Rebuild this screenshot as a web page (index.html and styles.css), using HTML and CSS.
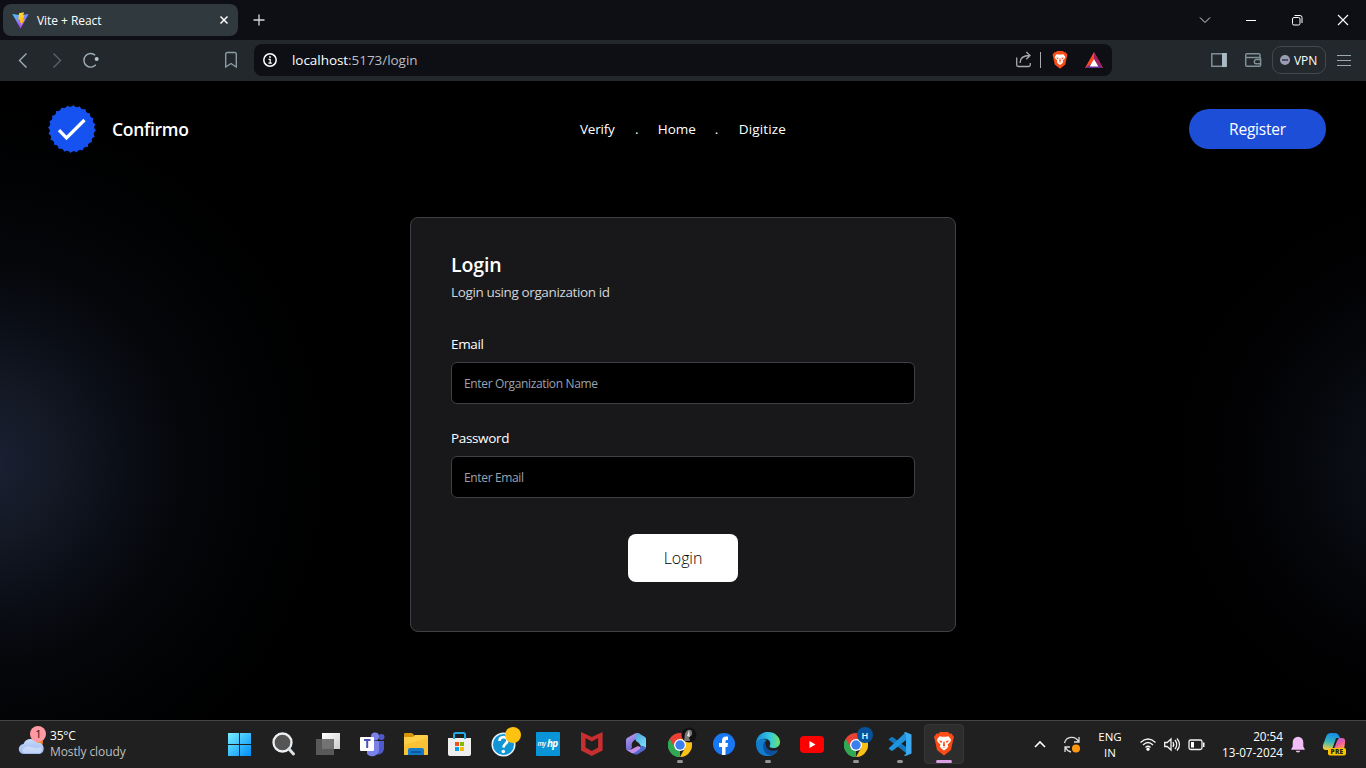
FILE: index.html
```html
<!DOCTYPE html>
<html lang="en">
<head>
<meta charset="utf-8">
<title>Vite + React</title>
<link rel="stylesheet" href="styles.css">
</head>
<body>
<div class="screen">
  <div class="tabs">
    <div class="tab">
      <svg class="tab-icon" width="17" height="17" viewBox="0 0 17 17"><defs><linearGradient id="vite" x1="0" y1="0" x2=".6" y2="1"><stop offset="0" stop-color="#41d1ff"/><stop offset="1" stop-color="#bd34fe"/></linearGradient><linearGradient id="bolt" x1="0" y1="0" x2="0" y2="1"><stop offset="0" stop-color="#ffdd35"/><stop offset="1" stop-color="#ffa800"/></linearGradient></defs><path fill="url(#vite)" d="M.3 2 8.5 3.3 16.7 2 8.5 16.5z"/><path fill="url(#bolt)" d="M12 .3 7 1.3 6.3 8l2-.5-.6 3.5 1.6-.5-.8 4L13 7l-2 .4L12.500 3.400l-1.300.2z"/></svg>
      <span class="tab-title">Vite + React</span>
      <svg class="tab-close" width="10" height="10" viewBox="0 0 10 10"><path d="M1.500 1.500 8.500 8.500M8.500 1.500 1.500 8.500" stroke="#fff" stroke-width="1.500"/></svg>
    </div>
    <svg class="tab-new" width="12" height="12" viewBox="0 0 12 12"><path d="M6 .5v11M.5 6h11" stroke="#d5d7dc" stroke-width="1.300"/></svg>
    <div class="window-buttons">
      <svg width="46" height="40" viewBox="0 0 46 40"><path d="m18 17.500 5 5 5-5" stroke="#ddd" fill="none"/></svg>
      <svg width="46" height="40" viewBox="0 0 46 40"><path d="M18 20.500h10" stroke="#fff"/></svg>
      <svg width="46" height="40" viewBox="0 0 46 40"><g stroke="#fff" fill="none"><rect x="18.500" y="17.500" width="7.500" height="7.500" rx="1.500"/><path d="M20.500 15.500h5.500a2 2 0 0 1 2 2V23"/></g></svg>
      <svg width="46" height="40" viewBox="0 0 46 40"><path d="m18 15 10 10M28 15 18 25" stroke="#fff" stroke-width="1.100"/></svg>
    </div>
  </div>

  <div class="toolbar">
    <svg class="nav-buttons" width="110" height="41" viewBox="0 0 110 41"><g fill="none" stroke-width="1.400"><path d="m26.500 13.500-7 7 7 7" stroke="#9eafb8"/><path d="m53.500 13.500 7 7-7 7" stroke="#58646a"/><path d="M95.800 24.800A6.800 6.800 0 1 1 95.200 15.200" stroke="#9eafb8"/></g><circle cx="96.700" cy="19" r="2" fill="#b5c6ce"/></svg>
    <svg class="bookmark" width="14" height="18" viewBox="0 0 14 18"><path d="M1.700 3a1.500 1.500 0 0 1 1.500-1.500h7.600A1.500 1.500 0 0 1 12.300 3v13L7 12.500 1.700 16z" fill="none" stroke="#8b9ba4" stroke-width="1.400"/></svg>
    <div class="address">
      <svg class="info" width="14" height="14" viewBox="0 0 14 14"><circle cx="7" cy="7" r="6.200" fill="none" stroke="#fff" stroke-width="1.500"/><path d="M5.500 6.300H7.200V10M5.400 10.200h3.400" fill="none" stroke="#fff" stroke-width="1.200"/><circle cx="7" cy="4" r=".9" fill="#fff"/></svg>
      <span class="url"><b>localhost</b>:5173/login</span>
      <svg class="address-icons" width="96" height="32" viewBox="0 0 96 32"><g fill="none" stroke="#a9aaad" stroke-width="1.300"><path d="M4.700 13.500v7.300c0 1 .7 1.700 1.700 1.700h10.200c1 0 1.700-.7 1.700-1.700V19"/><path d="M8 19c0-4.500 3.500-7.500 9.800-7.500M14.300 8l3.700 3.500-3.700 3.700"/></g><path d="M28.500 8v16" stroke="#a9aaad"/><use href="#brave" x="40" y="7" width="16" height="18"/><path d="M82 8 73 24h18z" fill="#ff4724"/><path d="m82 8 9 16-9-5.500z" fill="#9e1f63"/><path d="m73 24 9-6 9 6z" fill="#662d91"/><path d="m82 15-4.300 7.500h8.600z" fill="#fff"/></svg>
    </div>
    <svg class="panel-icons" width="56" height="20" viewBox="0 0 56 20"><g fill="none" stroke="#7f9099" stroke-width="1.500"><rect x="1.800" y="3.800" width="14.200" height="12.500"/><path d="M50 7.500V5a1.300 1.300 0 0 0-1.300-1.300H37A1.300 1.300 0 0 0 35.700 5v10A1.300 1.300 0 0 0 37 16.300h12.300a1.300 1.300 0 0 0 1.300-1.300V9a1.500 1.500 0 0 0-1.500-1.500H36M51 9.500h-5a2.200 2.200 0 0 0 0 4.300h5"/></g><path d="M12 3h4.800v14H12z" fill="#a9bbc4"/></svg>
    <div class="vpn"><svg width="10" height="10" viewBox="0 0 10 10"><circle cx="5" cy="5" r="5" fill="#9b9bb4"/><path d="M2 5h6" stroke="#353746" stroke-width="1.500"/></svg><span>VPN</span></div>
    <svg class="menu" width="14" height="12" viewBox="0 0 14 12"><path d="M0 1.500h14M0 6.500h14M0 11.500h14" stroke="#98a9b1" stroke-width="1"/></svg>
  </div>

  <main class="page">
    <header class="site-header">
      <div class="brand">
        <svg width="50" height="50" viewBox="-25 -25 50 50"><g fill="#1552f0"><circle r="22.400"/><path id="seal" d="M-17-17H17V17H-17z" transform="rotate(3.750)"/><use href="#seal" transform="rotate(15)"/><use href="#seal" transform="rotate(30)"/><use href="#seal" transform="rotate(45)"/><use href="#seal" transform="rotate(60)"/><use href="#seal" transform="rotate(75)"/></g><path d="m-13 1.200 7.500 7.600L12.500-9" fill="none" stroke="#fff" stroke-width="3.300"/></svg>
        <span class="brand-name">Confirmo</span>
      </div>
      <nav class="site-nav"><a class="verify">Verify</a><i>.</i><a class="home">Home</a><i>.</i><a class="digitize">Digitize</a></nav>
      <button class="register">Register</button>
    </header>
    <form class="card">
      <h1>Login</h1>
      <p class="subtitle">Login using organization id</p>
      <label class="email-label">Email</label>
      <div class="field field-org">Enter Organization Name</div>
      <label class="password-label">Password</label>
      <div class="field field-email">Enter Email</div>
      <button class="submit" type="button">Login</button>
    </form>
  </main>

  <footer class="taskbar">
    <div class="weather">
      <svg width="32" height="32" viewBox="0 0 32 32"><defs><linearGradient id="cloud" x1="0" y1="0" x2="0" y2="1"><stop stop-color="#c7dcff"/><stop offset="1" stop-color="#9bb6e9"/></linearGradient></defs><circle cx="20" cy="14" r="6" fill="#f47c13"/><path d="M7 26a5 5 0 0 1-.5-10 7.500 7.500 0 0 1 13.500-1.500 6 6 0 0 1 3 11.500z" fill="url(#cloud)"/><path d="M7 20c6-4 9 2 17-1 2 4 0 6-3 6H8c-3 0-4-3-1-5z" fill="#e0ebff" opacity=".55"/><circle cx="21" cy="6" r="8" fill="#ff99a4"/><text class="badge-number" x="21.500" y="10" text-anchor="middle">1</text></svg>
      <div class="weather-text"><span class="temp">35°C</span><span class="sky">Mostly cloudy</span></div>
    </div>
    <div class="apps">
      <div class="app"><svg viewBox="0 0 32 32"><defs><linearGradient id="win" x1="0" y1="0" x2="1" y2="1"><stop stop-color="#78efff"/><stop offset="1" stop-color="#008df8"/></linearGradient></defs><path fill="url(#win)" d="M4 4h11v11H4zM16 4h11v11H16zM4 16h11v11H4zM16 16h11v11H16z"/></svg></div>
      <div class="app"><svg viewBox="0 0 32 32"><circle cx="14.500" cy="13.500" r="9" fill="#555" stroke="#edf0f3" stroke-width="2.300"/><path d="m21 20 4.500 5" stroke="#dce1e6" stroke-width="3" stroke-linecap="round"/></svg></div>
      <div class="app"><svg viewBox="0 0 32 32"><defs><linearGradient id="task" x2="1" y2="1"><stop stop-color="#fff"/><stop offset="1" stop-color="#ccc"/></linearGradient></defs><path d="M10 4h18v16H10z" fill="url(#task)"/><path d="M4 10h18v16H4z" fill="#626262" opacity=".87"/></svg></div>
      <div class="app"><svg viewBox="0 0 32 32"><circle cx="25.500" cy="8" r="3" fill="#5059c9"/><path d="M18 12h10v8a6 6 0 0 1-8 5z" fill="#5059c9"/><circle cx="19" cy="7.500" r="4" fill="#7b83eb"/><path d="M11 12h12v7a7 7 0 0 1-12 6z" fill="#7b83eb"/><rect x="4" y="8" width="14" height="14" rx="1" fill="#fff"/><path d="M8 11h6.500M11.200 11v8" stroke="#4b53bc" stroke-width="2"/></svg></div>
      <div class="app"><svg viewBox="0 0 32 32"><path d="M4 5q0-1 1-1h7l3 3-3 4H4z" fill="#d89309"/><path d="M4 8h9l2-2h12q1 0 1 1v18q0 1-1 1H4z" fill="#ffcf48"/><path d="M4 16 28 9v16q0 1-1 1H4z" fill="#f8bd2f" opacity=".7"/><path d="M8 26v-5q0-2 2-2h12q2 0 2 2v5z" fill="#1479c9"/><path d="M11 23h10" stroke="#0a5294" stroke-width="1.500"/></svg></div>
      <div class="app"><svg viewBox="0 0 32 32"><path d="M4 9h23v16q0 2-2 2H6q-2 0-2-2z" fill="#efefef"/><path d="M10 10V5.500Q10 4 11.500 4h8Q21 4 21 5.500V10" fill="none" stroke="#22a9e8" stroke-width="2"/><path fill="#f25022" d="M11 13h4v4h-4z"/><path fill="#7fba00" d="M16 13h4v4h-4z"/><path fill="#00a4ef" d="M11 18h4v4h-4z"/><path fill="#ffb900" d="M16 18h4v4h-4z"/></svg></div>
      <div class="app"><svg viewBox="0 0 32 32"><circle cx="15.500" cy="15.500" r="11.300" fill="#1095d5" stroke="#e7f3fa" stroke-width="1.500"/><path d="M11.500 12c0-5 8-5 8-.5 0 3.500-4 3-4 7" fill="none" stroke="#fff" stroke-width="2.700"/><circle cx="15.300" cy="22.500" r="1.800" fill="#fff"/><circle cx="25" cy="6" r="8" fill="#ffc20e"/></svg></div>
      <div class="app"><svg viewBox="0 0 32 32"><rect x="4" y="3" width="24" height="24" rx="1" fill="#0894d6"/><text class="hp-my" x="5.500" y="17">my</text><text class="hp-name" x="15" y="18">hp</text></svg></div>
      <div class="app"><svg viewBox="0 0 32 32"><path d="m5 3 10.800 5L26.600 3v18.500L15.800 27 5 21.500zm4.500 6v9.500l6.300 3.500 6.300-3.500V9l-6.300 3.500z" fill="#c62e2f" fill-rule="evenodd"/></svg></div>
      <div class="app"><svg viewBox="0 0 32 32"><defs><linearGradient id="m1" y2="1" x2=".3"><stop stop-color="#bfa0f5"/><stop offset="1" stop-color="#6a65ce"/></linearGradient><linearGradient id="m2" x2=".5" y2="1"><stop stop-color="#4e9fd9"/><stop offset="1" stop-color="#75dcfa"/></linearGradient></defs><path d="M6 11q0-1 1-2l8-4.500q2-1 4 0-3 2-3 5l-3 3q-2 2-1 6l-3 4q-3-1-3-4z" fill="url(#m1)"/><path d="M18 4q1 0 2 1l5 3q1 1 1 2v9q-2-2-5-2-1-3-5-5l-1-3q0-3 3-5z" fill="url(#m2)"/><path d="M7 21h6l4-2 4-2q4 0 5 2-1 2-3 3l-5 3q-2 1-4 0z" fill="#5268cc"/><path d="M6 20q3 2 6 0l6-3 2 1v2l-6 4q-2 1-4-1z" fill="#c48ee9"/></svg></div>
      <div class="app running"><svg viewBox="0 0 32 32"><use href="#chrome" x="4" y="4" width="24" height="24"/><circle cx="25" cy="6" r="7.500" fill="#111"/><path d="M20 12c1-4 0-9 4-11q5-1 4 5l-3 2 1 4z" fill="#777"/><path d="m25 1-2 6 3 1z" fill="#ddd"/></svg></div>
      <div class="app"><svg viewBox="0 0 32 32"><circle cx="16" cy="15" r="11" fill="#1877f2"/><path d="M14 26v-8h-3v-4h3v-2c0-4 2-5 6-4.500V11c-2-.2-2.500.3-2.500 1.500V14H20l-.5 4h-2v8z" fill="#fff"/></svg></div>
      <div class="app running"><svg viewBox="0 0 32 32"><defs><linearGradient id="edge" x2="1" y2="0"><stop stop-color="#168bdc"/><stop offset=".6" stop-color="#38c9dd"/><stop offset="1" stop-color="#6be363"/></linearGradient></defs><path d="M4 15C4 8 9 3 16 3s12 5 12 10c0 4-3 6-7 6-3 0-4-1-3-3 2-6-8-10-14-1z" fill="url(#edge)"/><path d="M4 15c2-5 7-6 11-4-4 2-5 8 0 11 4 3 8 1 11-1-2 4-6 6-11 6C8 27 4 21 4 15z" fill="#117dcc"/><path d="M14 12c-5 4-3 12 3 14 3 1 7-2 9-5-9 3-14-3-12-9z" fill="#0b519e"/></svg></div>
      <div class="app"><svg viewBox="0 0 32 32"><rect x="4" y="7" width="24" height="17" rx="4" fill="#f00"/><path d="m13.500 12 6 3.500-6 3.500z" fill="#fff"/></svg></div>
      <div class="app running"><svg viewBox="0 0 32 32"><use href="#chrome" x="4" y="4" width="24" height="24"/><circle cx="25" cy="6" r="8" fill="#06529b"/><text class="profile" x="25" y="9.500" text-anchor="middle">H</text></svg></div>
      <div class="app running"><svg viewBox="0 0 32 32"><path d="M4.500 10.500 7 8.300q1-.6 2 0L22 18v6z" fill="#1279c1"/><path d="M4.500 19.500 22 3v8L9 21.500q-1 .6-2 0z" fill="#1f93dc"/><path d="m21.500 3 6 2.500V24.500l-6 2.500q-1 0-1.500-1l2-1V5.500l-2-1.500q.5-1 1.500-1z" fill="#3baaf0"/></svg></div>
      <div class="app running active"><svg viewBox="0 0 32 32"><use href="#brave" x="6" y="4" width="20" height="24"/></svg></div>
    </div>
    <div class="tray">
      <svg class="tray-left" width="54" height="30" viewBox="0 0 54 30"><path d="m5 17 5-5 5 5" fill="none" stroke="#fff" stroke-width="1.600"/><g fill="none" stroke="#ddd" stroke-width="1.300"><path d="M34.500 13a7.500 7.500 0 0 1 14-1.500M49 7v5h-5M35 22v-5h5M35.500 17.500A8 8 0 0 0 41 22"/></g><circle cx="46" cy="18.500" r="4" fill="#ff9810"/></svg>
      <div class="language"><span class="eng">ENG</span><span class="in">IN</span></div>
      <svg class="status" width="66" height="24" viewBox="0 0 66 24"><g fill="none" stroke="#f2f2f2" stroke-width="1.300"><path d="M.5 9.500q7.500-7 15 0M3 12q5-5 10 0M5.500 14.500q2.500-2.500 5 0"/><path d="M24.700 9.500h2.500L31 6v11l-3.800-3.500h-2.500zM33 9q1.500 2.500 0 5M35 7q3.500 4.500 0 9M37 5.500q5 6 0 12"/><rect x="49" y="7" width="13" height="9.500" rx="1.800"/></g><circle cx="8" cy="16.200" r="1.600" fill="#fff"/><path d="M51 9h3v5.500h-3zM63 9.500h1.500v4.500H63z" fill="#fff"/></svg>
      <div class="clock"><span class="time">20:54</span><span class="date">13-07-2024</span></div>
      <svg class="bell" width="14" height="17" viewBox="0 0 14 17"><path d="M7 .8A5.300 5.300 0 0 0 1.700 6v4.500L.3 13v.7h13.400V13l-1.400-2.500V6A5.300 5.300 0 0 0 7 .8zM4.800 14.700h4.400a2.200 1.700 0 0 1-4.400 0z" fill="#f1bef5"/></svg>
      <svg class="copilot" width="28" height="28" viewBox="0 0 28 28"><defs><linearGradient id="co1" x1=".4" x2=".2" y2="1"><stop stop-color="#168be6"/><stop offset=".5" stop-color="#35b7bd"/><stop offset="1" stop-color="#ffd036"/></linearGradient><linearGradient id="co2" x2=".5" y2="1"><stop stop-color="#a462ed"/><stop offset=".6" stop-color="#ed5ca0"/><stop offset="1" stop-color="#fe945c"/></linearGradient></defs><path d="M5 6q1-4 5-4h4q3 0 4 3l1 2h-4l-3 9q-1 3-4 3H5q-4 0-3-5z" fill="url(#co1)"/><path d="m16 10 2-3h3q4 0 3 5l-1 6H13z" fill="url(#co2)"/><rect x="7" y="17" width="18" height="7.500" rx="2" fill="#ffc400"/><text class="pre" x="16" y="23.200" text-anchor="middle">PRE</text></svg>
    </div>
  </footer>
</div>

<svg class="symbols" width="0" height="0">
  <symbol id="brave" viewBox="0 0 20 24"><path d="M6 0 4.500 1.800 2.500 1.500 0 5l.8 2.500L3 18l7 5.500 7-5.500 2.200-10.500L20 5l-2.500-3.500-2 .3L14 0z" fill="#fb4b16"/><path d="m5.500 4.300 2.500.5h4l2.500-.5L17 7.500l-.5 2-3 3.200.7 2-1.500 1.800L10 18.500l-2.700-2-1.500-1.800.7-2-3-3.200-.5-2z" fill="#fff"/><path d="m4.800 8.500 3.400.5-1 2.300zM15.200 8.500l-3.400.5 1 2.300zM9.500 9.500h1l.6 4-1.100 1.300-1.100-1.300zM7.800 16l2.200-1 2.200 1-2.200-.4z" fill="#fb4b16"/></symbol>
  <symbol id="chrome" viewBox="0 0 24 24"><path d="M12 12 1.600 6A12 12 0 0 1 22.400 6z" fill="#e94235"/><path d="M12 12h-5L1.600 6A12 12 0 0 0 12 24z" fill="#32a853"/><path d="M12 6h10.400A12 12 0 0 1 12 24l5-9z" fill="#fbc116"/><path d="m1.600 6 5.200 9L12 6z" fill="#e94235"/><path d="m1.600 6 5.200 9 5 3L12 24A12 12 0 0 1 1.600 6z" fill="#32a853"/><circle cx="12" cy="12" r="6" fill="#fff"/><circle cx="12" cy="12" r="4.700" fill="#397fef"/></symbol>
</svg>
</body>
</html>
```

FILE: styles.css
```css
* { box-sizing: border-box; }
body { margin: 0; background: #000; color: #fff; font-family: "Open Sans", "Noto Sans", sans-serif; font-size: 14px; overflow: hidden; }
svg { display: block; flex: none; }
span, a, label { white-space: nowrap; }
button { font-family: inherit; border: 0; padding: 0; }
.symbols { position: absolute; }
.screen { width: 1366px; height: 768px; display: flex; flex-direction: column; }

/* Browser window */
.tabs { height: 40px; background: #0d0f14; display: flex; align-items: center; padding-left: 3px; flex: none; }
.tab { width: 235px; height: 32px; border-radius: 8px; background: #30393d; display: flex; align-items: center; padding: 0 9px; }
.tab-title { margin-left: 8px; font-size: 12px; letter-spacing: -.05px; }
.tab-close { margin-left: auto; }
.tab-new { margin-left: 15px; }
.window-buttons { display: flex; margin-left: auto; }
.toolbar { height: 41px; background: #22282b; display: flex; align-items: center; flex: none; padding-bottom: 1px; }
.bookmark { margin-left: 114px; }
.address { width: 858px; height: 32px; margin-left: 16px; background: #0d0f14; border-radius: 8px; display: flex; align-items: center; padding-left: 9px; }
.url { margin-left: 15px; font-size: 13.5px; color: #bbbdc2; letter-spacing: -.05px; }
.url b { color: #fff; font-weight: 400; }
.address-icons { margin-left: auto; margin-right: 4px; }
.panel-icons { margin-left: 98px; }
.vpn { width: 54px; height: 28px; border: 1px solid #42494e; border-radius: 9px; margin-left: 6px; display: flex; align-items: center; padding-left: 7px; font-size: 12px; }
.vpn span { margin-left: 4px; letter-spacing: -.1px; }
.menu { margin-left: 11px; }

/* Login page */
.page { height: 639px; flex: none; background: radial-gradient(circle at 1440px 382px, #11141f 0, #0b0e16 75px, #05070b 140px, #020204 200px, #000 290px, transparent 291px), radial-gradient(circle at -20px 382px, #1c2235 0, #131824 80px, #0a0d15 150px, #050609 210px, #010203 290px, #000 370px); }
.site-header { height: 96px; display: flex; align-items: center; padding: 0 40px 0 47px; }
.brand { width: 533px; display: flex; align-items: center; }
.brand-name { margin-left: 15px; font-size: 17.5px; font-weight: 600; letter-spacing: -.3px; }
.site-nav { width: 206px; display: flex; align-items: center; font-size: 13.5px; font-weight: 500; }
.site-nav a { letter-spacing: -.2px; }
.site-nav .verify { width: 55px; }
.site-nav .home { width: 57px; letter-spacing: -.1px; }
.site-nav .digitize { letter-spacing: .15px; }
.site-nav i { font-style: normal; width: 4px; margin-right: 19px; }
.site-nav .home + i { margin-right: 20px; }
.register { width: 137px; height: 40px; margin-left: auto; border-radius: 20px; color: #fff; background: #1d4ed8; font-size: 15.5px; letter-spacing: -.2px; }
.card { width: 546px; height: 415px; margin: 40px auto 0; border: 1px solid #3f3f46; border-radius: 8px; background: #18181b; padding: 33px 40px 0; display: flex; flex-direction: column; align-items: flex-start; }
.card h1 { margin: 0; font-size: 19.5px; line-height: 28px; font-weight: 600; letter-spacing: -.1px; }
.subtitle { margin: 3px 0 32px; font-size: 13.5px; line-height: 20px; color: #d4d4d8; letter-spacing: -.37px; }
.card label { font-size: 13.5px; line-height: 20px; font-weight: 500; letter-spacing: -.35px; }
.field { width: 464px; height: 42px; margin: 8px 0 24px; border: 1px solid #3f3f46; border-radius: 6px; background: #000; padding: 0 12px; line-height: 41px; font-size: 12px; color: #9ca3af; letter-spacing: -.35px; }
.submit { width: 110px; height: 48px; margin: 12px auto 0; border-radius: 8px; background: #fff; color: #000; font-size: 16px; font-weight: 350; letter-spacing: -.1px; }

/* Desktop taskbar */
.taskbar { height: 48px; background: #202020; border-top: 1px solid #454545; display: flex; align-items: center; font-size: 12px; line-height: 16px; }
.weather { width: 218px; display: flex; padding-left: 17px; align-items: center; padding-bottom: 2px; }
.weather > svg { overflow: visible; }
.weather-text { display: flex; flex-direction: column; margin-left: 1px; }
.temp { letter-spacing: -.2px; }
.sky { color: #bfbfbf; letter-spacing: -.1px; }
.badge-number { font-size: 11px; fill: #111; }
.apps { display: flex; }
.app { width: 44px; height: 47px; display: flex; justify-content: center; padding-top: 8px; position: relative; }
.app > svg { width: 32px; height: 32px; overflow: visible; }
.running::after { content: ""; position: absolute; bottom: 5px; left: 19px; width: 6px; height: 3px; border-radius: 2px; background: #969696; }
.active { width: 40px; height: 40px; padding-top: 3px; margin: 3px 2px; background: #2d2d2d; border: 1px solid #363636; border-radius: 4px; }
.active::after { width: 16px; left: 11px; bottom: 0; background: #da9ee5; }
.hp-my { font-size: 6.500px; font-style: italic; font-weight: 600; fill: #fff; letter-spacing: -.5px; }
.hp-name { font-size: 10px; font-style: italic; font-weight: 700; fill: #fff; letter-spacing: -.7px; }
.profile { font-size: 9px; fill: #fff; font-weight: 600; }
.tray { display: flex; align-items: center; margin-left: 64px; }
.language { width: 24px; margin-left: 14px; display: flex; flex-direction: column; align-items: center; font-size: 11.5px; }
.status { margin-left: 18px; }
.clock { width: 77px; display: flex; flex-direction: column; align-items: flex-end; font-size: 11.7px; padding-bottom: 2px; }
.bell { margin-left: 8px; }
.copilot { margin-left: 16px; }
.pre { font-size: 6.500px; font-weight: 800; fill: #222; letter-spacing: .3px; }
```
